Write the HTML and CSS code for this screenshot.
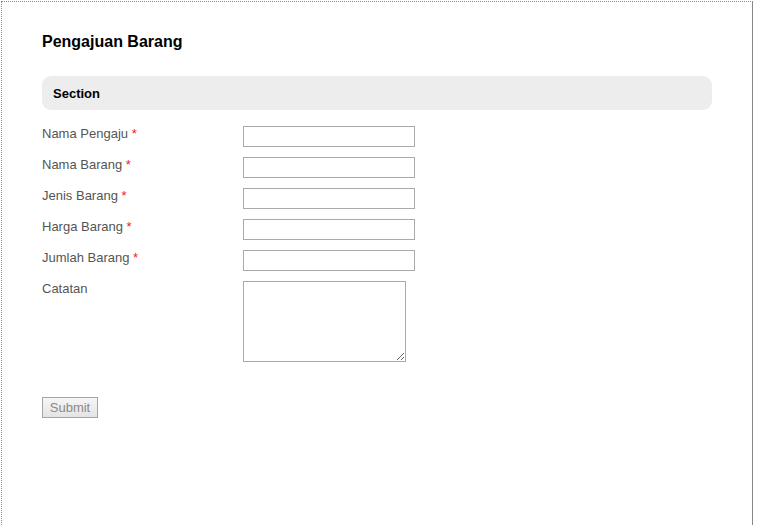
FILE: index.html
```html
<!DOCTYPE html>
<html>
<head>
<meta charset="utf-8">
<link rel="stylesheet" href="styles.css">
</head>
<body>
<div class="frame">
  <h1 class="title">Pengajuan Barang</h1>
  <div class="section">Section</div>
  <form class="form">
    <div class="row"><label class="label">Nama Pengaju <span class="req">*</span></label><input class="input" type="text"></div>
    <div class="row"><label class="label">Nama Barang <span class="req">*</span></label><input class="input" type="text"></div>
    <div class="row"><label class="label">Jenis Barang <span class="req">*</span></label><input class="input" type="text"></div>
    <div class="row"><label class="label">Harga Barang <span class="req">*</span></label><input class="input" type="text"></div>
    <div class="row"><label class="label">Jumlah Barang <span class="req">*</span></label><input class="input" type="text"></div>
    <div class="row"><label class="label">Catatan</label><textarea class="textarea"></textarea></div>
    <div class="actions"><button class="submit" type="button" disabled>Submit</button></div>
  </form>
</div>
</body>
</html>
```

FILE: styles.css
```css
html, body {
  margin: 0;
  padding: 0;
  background: #fff;
  overflow: hidden;
}
body {
  font-family: Arial, "Liberation Sans", sans-serif;
}
.frame {
  margin: 1px 0 0 1px;
  width: 752px;
  height: 524px;
  border-top: 1px dotted #888;
  border-left: 1px dotted #888;
  border-right: 1px solid #888;
  padding: 0 40px;
  box-sizing: border-box;
}
.title {
  margin: 0;
  padding-top: 31px;
  font-size: 16px;
  line-height: 18px;
  font-weight: bold;
  color: #000;
}
.section {
  margin-top: 25px;
  width: 670px;
  height: 34px;
  box-sizing: border-box;
  background: #ededed;
  border-radius: 9px;
  padding-left: 11px;
  display: flex;
  align-items: center;
  font-size: 13px;
  font-weight: bold;
  color: #000;
}
.form {
  margin-top: 16px;
}
.row {
  display: flex;
  align-items: flex-start;
  margin-bottom: 10px;
}
.label {
  width: 201px;
  flex: none;
  font-size: 13px;
  line-height: 15px;
  color: #555;
}
.req {
  color: #f02020;
}
.input {
  width: 172px;
  height: 21px;
  box-sizing: border-box;
  border: 1px solid #aaa;
  margin: 0;
  padding: 0 3px;
  font-size: 13px;
}
.textarea {
  width: 163px;
  height: 81px;
  box-sizing: border-box;
  border: 1px solid #aaa;
  margin: 0;
  padding: 2px;
  resize: both;
  font-size: 13px;
}
.actions {
  margin-top: 35px;
}
.submit {
  width: 56px;
  height: 21px;
  margin: 0;
  padding: 0;
  box-sizing: border-box;
  border: 1px solid #a5a5a5;
  background: linear-gradient(#f6f6f6, #e4e4e4);
  color: #8a8a8a;
  font-family: Arial, "Liberation Sans", sans-serif;
  font-size: 13px;
  border-radius: 0;
}
```
